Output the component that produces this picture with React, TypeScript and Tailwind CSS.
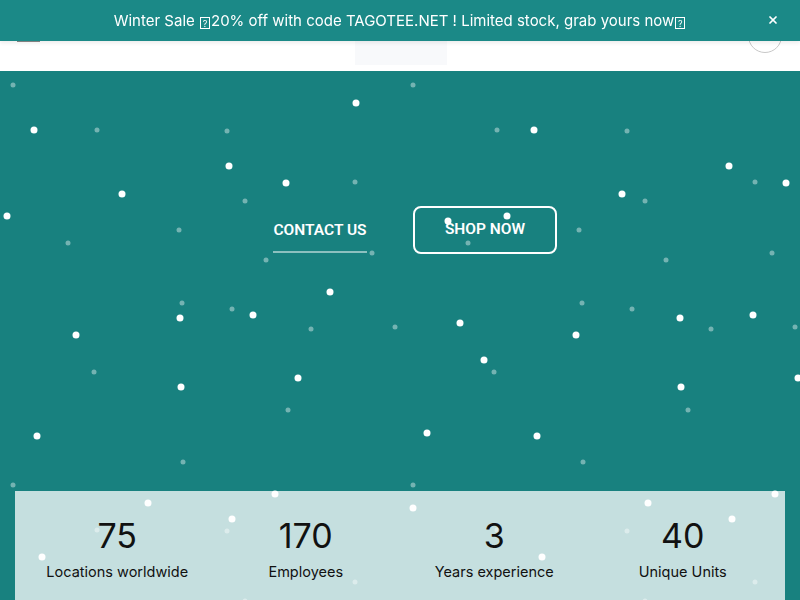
import { X } from "lucide-react";

// bright flakes, tile repeats every 500px across
const brightFlakes = [
  [356, 103], [34, 130], [229, 166], [286, 183], [122, 194], [7, 216],
  [448, 221], [330, 292], [180, 318], [253, 315], [460, 323], [76, 335],
  [484, 360], [298, 378], [181, 387], [37, 436], [427, 433], [275, 494],
  [148, 503], [413, 508], [232, 519], [42, 557],
];

// faint flakes, tile repeats every 400px both ways
const faintFlakes = [
  [13, 85], [97, 130], [227, 131], [355, 182], [245, 201], [179, 230],
  [68, 243], [372, 253], [266, 260], [182, 303], [232, 309], [311, 329],
  [395, 327], [94, 372], [288, 410], [183, 462],
];

const stats = [
  { value: "75", label: "Locations worldwide" },
  { value: "170", label: "Employees" },
  { value: "3", label: "Years experience" },
  { value: "40", label: "Unique Units" },
];

const HERO_TOP = 71;

function Snow() {
  const dots: { x: number; y: number; bright: boolean }[] = [];
  for (const [x, y] of brightFlakes) {
    for (const dx of [0, 500]) {
      if (x + dx < 805) dots.push({ x: x + dx, y, bright: true });
    }
  }
  for (const [x, y] of faintFlakes) {
    for (const dx of [0, 400]) {
      for (const dy of [0, 400]) {
        if (x + dx < 805 && y + dy < 640) dots.push({ x: x + dx, y: y + dy, bright: false });
      }
    }
  }
  return (
    <div className="pointer-events-none absolute inset-0 z-10 overflow-hidden">
      {dots.map((d, i) =>
        d.bright ? (
          <span
            key={i}
            className="absolute h-[7px] w-[7px] -translate-x-1/2 -translate-y-1/2 rounded-full bg-white blur-[0.4px]"
            style={{ left: d.x, top: d.y - HERO_TOP }}
          />
        ) : (
          <span
            key={i}
            className="absolute h-[5px] w-[5px] -translate-x-1/2 -translate-y-1/2 rounded-full bg-white/40 blur-[0.6px]"
            style={{ left: d.x, top: d.y - HERO_TOP }}
          />
        )
      )}
    </div>
  );
}

// the emoji in the promo text shows as a missing-glyph box
function Tofu() {
  return (
    <span className="mx-[1px] inline-flex h-[12px] w-[10px] items-center justify-center border border-white align-[-1px] text-[9px] leading-none">
      ?
    </span>
  );
}

export default function App() {
  return (
    <div className="min-h-screen bg-white font-['Inter','Liberation_Sans',sans-serif]">
      {/* promo bar */}
      <div className="fixed inset-x-0 top-0 z-50 flex h-[41px] items-center justify-center bg-[#1b8987] shadow-[0_2px_4px_rgba(0,0,0,0.08)]">
        <p className="pt-[1px] text-[15px] text-white">
          Winter Sale <Tofu />20% off with code TAGOTEE.NET ! Limited stock, grab yours now<Tofu />
        </p>
        <button className="absolute right-[21px] top-[14px] text-white">
          <X size={12} strokeWidth={3.5} />
        </button>
      </div>

      {/* header */}
      <header className="flex h-[71px] items-center bg-white pl-[17px] pr-[18px]">
        <div className="flex flex-1">
          <div className="mt-[-1px] flex w-[23px] flex-col gap-[4px]">
            <span className="h-[2px] bg-[#888]" />
            <span className="h-[2px] bg-[#888]" />
            <span className="h-[2px] bg-[#888]" />
          </div>
        </div>
        <div className="ml-[2px] h-[58px] w-[92px] bg-[#f8f9fb]" />
        <div className="flex flex-1 justify-end">
          <div className="h-[34px] w-[34px] rounded-full border border-[#c8c8c8]" />
        </div>
      </header>

      {/* hero */}
      <section className="relative bg-[#18817f] pb-[1px]">
        <Snow />
        <div className="flex items-center justify-center gap-[18px] pl-[2px] pt-[135px] font-['Roboto',sans-serif]">
          <a className="flex w-[150px] justify-center">
            <span className="border-b-2 border-white/50 pb-[11px] pt-[13px] text-[15.5px] font-semibold uppercase leading-[20px] text-white">
              Contact us
            </span>
          </a>
          <a className="flex h-[48px] w-[144px] items-center justify-center rounded-lg border-2 border-white text-[15.5px] font-semibold uppercase text-white">
            Shop now
          </a>
        </div>

        <div className="mx-[15px] mt-[237px] grid grid-cols-4 bg-[#c5dfdf] px-[8px] pb-[40px] pt-[25px] text-[#111]">
          {stats.map((s) => (
            <div key={s.label} className="flex flex-col items-center">
              <span className="text-[34px] leading-[40px]">{s.value}</span>
              <span className="mt-[6px] text-[14.5px] leading-[20px]">{s.label}</span>
            </div>
          ))}
        </div>
      </section>
    </div>
  );
}
